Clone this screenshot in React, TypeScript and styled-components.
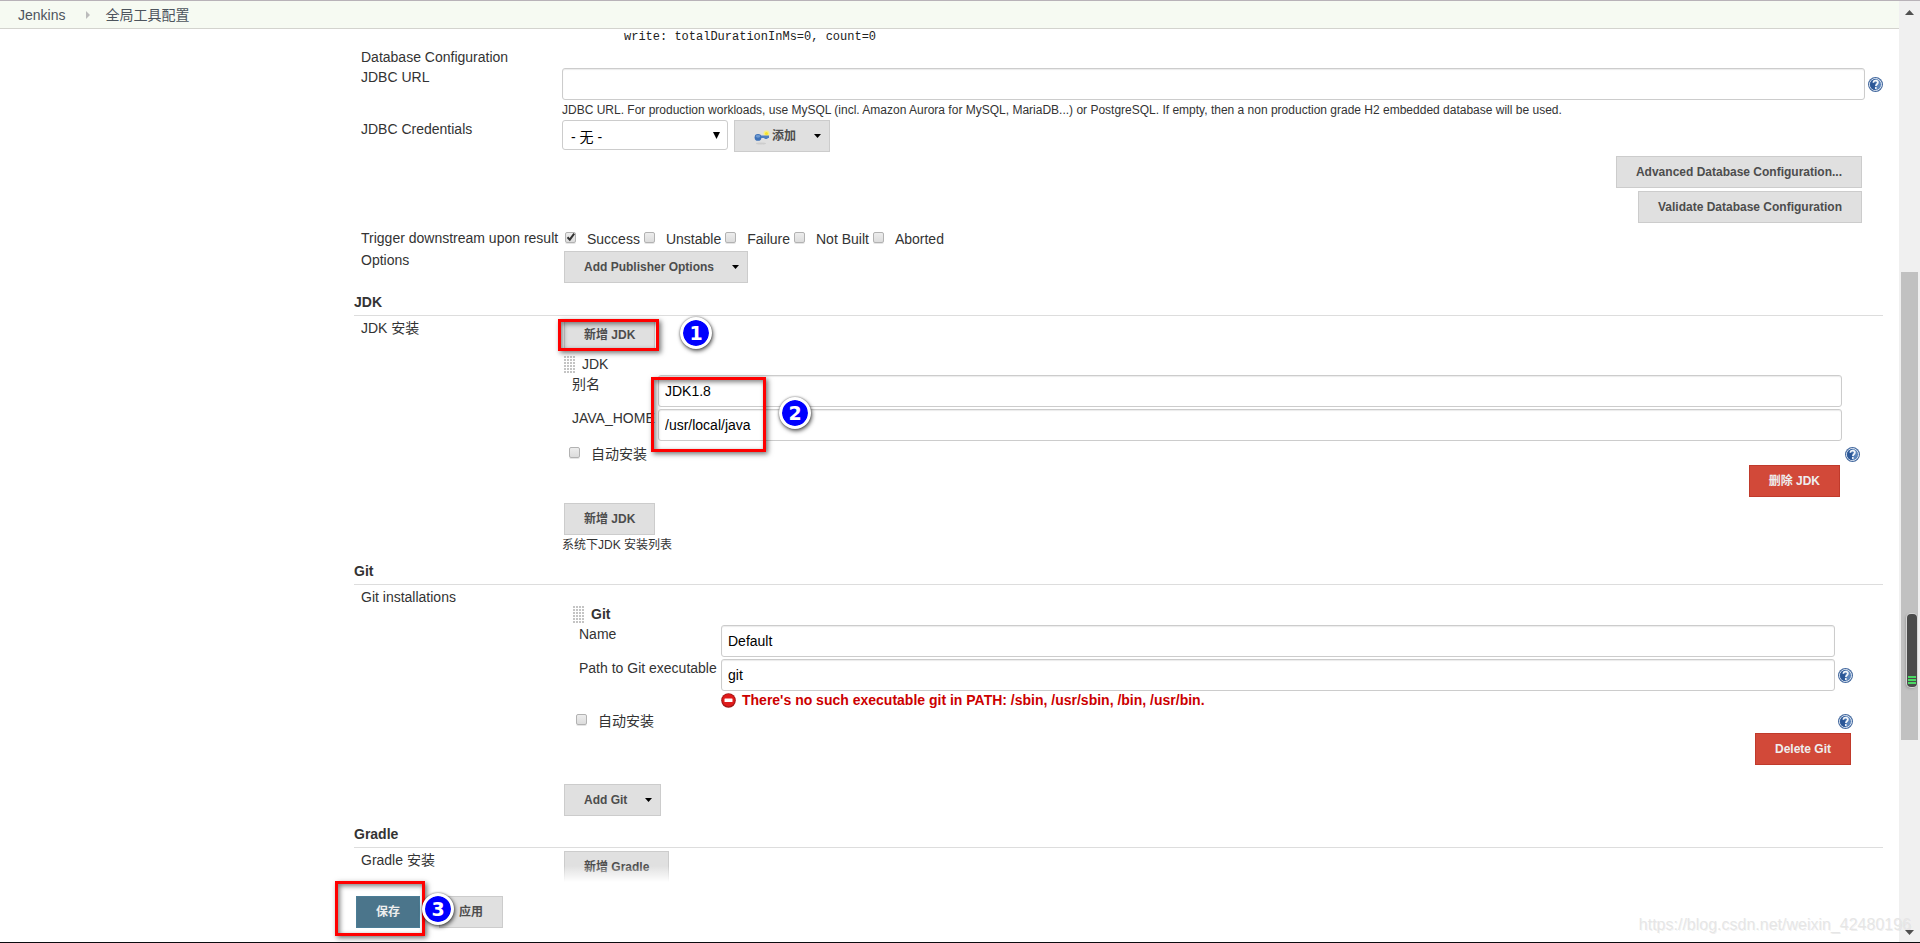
import React from "react";
import styled, { createGlobalStyle, css } from "styled-components";

const GlobalStyle = createGlobalStyle`
  *, *::before, *::after { box-sizing: border-box; }
  html, body { margin: 0; padding: 0; background: #fff; }
  body, button, input, select {
    font-family: "Liberation Sans", "Noto Sans CJK SC", sans-serif;
    font-size: 14px;
    line-height: 20px;
  }
  body { color: #333; }
`;

/* ---------- shell ---------- */

const Shell = styled.div`
  position: relative;
  display: grid;
  grid-template-columns: minmax(0, 1fr) 21px;
  height: 100vh;
  border-top: 1px solid #b8b2b8;
  border-bottom: 1px solid #0b0b0f;
  overflow: hidden;
`;

const Viewport = styled.div`
  position: relative;
  display: flex;
  flex-direction: column;
  min-height: 0;
  overflow: hidden;
`;

const Breadcrumbs = styled.nav`
  display: flex;
  align-items: center;
  flex: none;
  height: 28px;
  padding-left: 18px;
  background: #f6faf2;
  border-bottom: 1px solid #d3d3ce;
`;

const Crumb = styled.a`
  color: #4d545d;
  text-decoration: none;
`;

const CrumbArrow = styled.svg`
  width: 4px;
  height: 8px;
  margin: 0 15px 0 21px;
`;

const Main = styled.main`
  display: flex;
  flex-direction: column;
  padding: 0 16px 0 354px;
`;

const LogLine = styled.pre`
  margin: 0 0 2px;
  padding-left: 270px;
  font: 12px/16px "Liberation Mono", monospace;
  color: #222;
`;

/* ---------- form rows ---------- */

const Heading = styled.h2`
  margin: 0 0 2px;
  height: 24px;
  font-size: 14px;
  line-height: 20px;
  border-bottom: 1px solid #ddd;
`;

const Section = styled.section<{ $gap?: number }>`
  display: flex;
  flex-direction: column;
  margin-top: ${(p) => p.$gap ?? 8}px;
`;

const Row = styled.div<{ $label?: number; $top?: number; $nested?: boolean }>`
  display: grid;
  grid-template-columns: ${(p) => p.$label ?? 201}px minmax(0, 1fr) 18px;
  align-items: start;
  padding-left: ${(p) => (p.$nested ? 0 : 7)}px;
  margin-top: ${(p) => p.$top ?? 0}px;
`;

const rowLabel = css`
  height: 20px;
  white-space: nowrap;
`;
const RowLabel = styled.label`
  ${rowLabel}
`;
const RowTitle = styled.div`
  ${rowLabel}
`;

const Cell = styled.div<{ $indent?: number }>`
  display: flex;
  align-items: flex-start;
  gap: 6px;
  padding-top: 1px;
  padding-left: ${(p) => p.$indent ?? 0}px;
`;

const TextInput = styled.input`
  display: block;
  width: 100%;
  height: 32px;
  padding: 0 6px;
  color: #000;
  background: #fff;
  border: 1px solid #ccc;
  border-radius: 3px;
  box-shadow: inset 0 1px 1px rgba(0, 0, 0, 0.08);
  outline: none;
`;

const Description = styled.p`
  margin: 0 0 0 208px;
  height: 20px;
  font-size: 12px;
  line-height: 20px;
`;

const SelectBox = styled.div`
  position: relative;
  width: 166px;
`;

const Select = styled.select`
  appearance: none;
  display: block;
  width: 100%;
  height: 30px;
  padding: 3px 8px 0;
  color: #000;
  background: #fff;
  border: 1px solid #ccc;
  border-radius: 3px;
  outline: none;
`;

const SelectArrow = styled.svg`
  position: absolute;
  right: 8px;
  top: 12px;
  width: 7px;
  height: 7px;
  pointer-events: none;
`;

/* ---------- buttons ---------- */

type Tone = "plain" | "primary" | "danger";
const tones: Record<Tone, { bg: string; line: string; ink: string }> = {
  plain: { bg: "#e0e0e0", line: "#ccc", ink: "#4d4d4d" },
  primary: { bg: "#4b758b", line: "#4b7d96", ink: "#eee" },
  danger: { bg: "#d24939", line: "#c03a2b", ink: "#eee" },
};

const Button = styled.button<{ $tone?: Tone; $menu?: boolean }>`
  display: inline-flex;
  align-items: center;
  flex: none;
  height: 32px;
  padding: 0 ${(p) => (p.$menu ? 8 : 19)}px 0 19px;
  font-size: 12px;
  font-weight: bold;
  white-space: nowrap;
  color: ${(p) => tones[p.$tone ?? "plain"].ink};
  background: ${(p) => tones[p.$tone ?? "plain"].bg};
  border: 1px solid ${(p) => tones[p.$tone ?? "plain"].line};
`;

const CaretSvg = styled.svg`
  width: 7px;
  height: 4px;
  margin-left: 18px;
`;
const Caret = () => (
  <CaretSvg viewBox="0 0 7 4" aria-hidden="true">
    <path d="M0 0h7L3.5 4z" fill="#000" />
  </CaretSvg>
);

const KeySvg = styled.svg`
  width: 16px;
  height: 16px;
  margin: 4px 2px 0 0;
`;
const KeyIcon = () => (
  <KeySvg viewBox="0 0 16 16" aria-hidden="true">
    <ellipse cx="7" cy="13.5" rx="5" ry="1" fill="#cdcdcd" />
    <circle cx="12.500" cy="3.500" r="3" fill="#f7ee86" />
    <circle cx="12.500" cy="3.500" r="1.600" fill="#f5e22c" />
    <path d="M5 5.500h10v2.500h-1.500v1h-3v-1H5z" fill="#4f7fc0" />
    <ellipse cx="4" cy="7.400" rx="3.400" ry="3.400" fill="#3e72b8" />
    <ellipse cx="4" cy="6.300" rx="2.300" ry="1.400" fill="#6f9bd2" />
  </KeySvg>
);

const ButtonStack = styled.div<{ $right: number; $top: number }>`
  display: flex;
  flex-direction: column;
  align-items: flex-end;
  gap: 3px;
  margin-top: ${(p) => p.$top}px;
  padding-right: ${(p) => p.$right}px;
`;

/* ---------- check boxes ---------- */

const CheckLabel = styled.label`
  display: inline-flex;
  align-items: center;
  gap: 11px;
  height: 20px;
  white-space: nowrap;
`;

const CheckBoxWrap = styled.span`
  position: relative;
  display: block;
  width: 11px;
  height: 11px;
  margin-bottom: 3px;
`;

const CheckInput = styled.input`
  appearance: none;
  display: block;
  width: 11px;
  height: 11px;
  margin: 0;
  border: 1px solid #b2b2b2;
  border-radius: 2px;
  background: linear-gradient(#ededed, #dcdcdc);
  box-shadow: 0 1px 0 rgba(0, 0, 0, 0.1);
`;

const Tick = styled.svg`
  position: absolute;
  left: 1px;
  top: 0;
  width: 10px;
  height: 10px;
  pointer-events: none;
`;

const CheckBox = ({ label, checked }: { label: string; checked?: boolean }) => (
  <CheckLabel>
    <CheckBoxWrap>
      <CheckInput type="checkbox" defaultChecked={checked} />
      {checked && (
        <Tick viewBox="0 0 10 10" aria-hidden="true">
          <path d="M1.5 5.2 3.8 7.6 8.2 1.6" fill="none" stroke="#333" strokeWidth="2" />
        </Tick>
      )}
    </CheckBoxWrap>
    {label}
  </CheckLabel>
);

const CheckGroup = styled.div`
  display: flex;
  gap: 4px;
  padding-left: 3px;
  padding-top: 1px;
`;

/* ---------- icons ---------- */

const HelpLink = styled.a<{ $top?: number }>`
  display: block;
  width: 16px;
  height: 16px;
  margin-left: 2px;
  margin-top: ${(p) => p.$top ?? 0}px;
`;

const Help = ({ top }: { top?: number }) => (
  <HelpLink href="#help" $top={top} aria-label="Help">
    <svg width="16" height="16" viewBox="0 0 16 16" aria-hidden="true">
      <circle cx="8.5" cy="8.5" r="7.500" fill="#44699f" />
      <circle cx="8.5" cy="8.5" r="6" fill="#5c85bb" stroke="#e3eaf4" strokeWidth="1" />
      <path d="M3 8.500a5.500 5.500 0 0 1 5.500-5.500v11a5.500 5.500 0 0 1-5.500-5.500z" fill="#2b5797" />
      <path
        d="M6.400 6.800c0-1.500 1-2.200 2.200-2.200s2.300.7 2.300 2c0 1.600-2 1.700-2 3.300"
        fill="none"
        stroke="#f4f7fb"
        strokeWidth="1.700"
      />
      <circle cx="8.800" cy="12" r="1" fill="#fff" />
    </svg>
  </HelpLink>
);

const Handle = styled.span`
  flex: none;
  width: 11px;
  height: 18px;
  background-image: radial-gradient(circle at 1px 1px, #c4c4c4 1px, transparent 1px);
  background-size: 3px 3px;
`;

const ErrorIcon = () => (
  <svg width="15" height="15" viewBox="0 0 15 15" aria-hidden="true">
    <circle cx="7.5" cy="7.5" r="7.3" fill="#a31515" />
    <circle cx="7.5" cy="7.2" r="6.2" fill="#e01b1b" />
    <rect x="3.500" y="5.500" width="8" height="3.500" rx="0.500" fill="#fff" />
  </svg>
);

const ErrorLine = styled.div`
  display: flex;
  align-items: center;
  gap: 6px;
  height: 17px;
  font-weight: bold;
  color: #c00;

  svg { margin-top: 2px; }
`;

/* ---------- repeatable items ---------- */

const Item = styled.div<{ $left: number; $right: number; $top?: number }>`
  display: flex;
  flex-direction: column;
  margin-left: ${(p) => p.$left}px;
  margin-right: ${(p) => p.$right}px;
  margin-top: ${(p) => p.$top ?? 0}px;
`;

const ItemHeader = styled.div<{ $bold?: boolean }>`
  display: flex;
  align-items: center;
  gap: 7px;
  height: 20px;
  margin-left: ${(p) => (p.$bold ? -6 : -8)}px;
  font-weight: ${(p) => (p.$bold ? "bold" : "normal")};

  ${Handle} { margin-top: 2px; }
`;

const ItemFields = styled.div`
  position: relative;
  display: flex;
  flex-direction: column;
  gap: 1px;
`;

const AutoRow = styled.div<{ $top: number }>`
  display: flex;
  justify-content: space-between;
  height: 20px;
  margin-top: ${(p) => p.$top}px;
  margin-left: -3px;
`;

/* ---------- step annotations ---------- */

const Anchor = styled.div`
  position: relative;
  display: flex;
`;

type Box = { $x: number; $y: number; $w: number; $h: number };
const Frame = styled.div<Box>`
  position: absolute;
  left: ${(p) => p.$x}px;
  top: ${(p) => p.$y}px;
  width: ${(p) => p.$w}px;
  height: ${(p) => p.$h}px;
  border: 3px solid #f00;
  box-shadow: 2px 2px 5px rgba(0, 0, 0, 0.55), inset 2px 2px 5px rgba(0, 0, 0, 0.5);
  pointer-events: none;
`;

const Step = styled.div<{ $x: number; $y: number }>`
  position: absolute;
  z-index: 1;
  left: ${(p) => p.$x}px;
  top: ${(p) => p.$y}px;
  display: flex;
  align-items: center;
  justify-content: center;
  width: 32px;
  height: 32px;
  border: 3px solid #fff;
  border-radius: 50%;
  background: #00f;
  background-clip: padding-box;
  box-shadow: 1px 2px 4px rgba(0, 0, 0, 0.65), 0 0 2px rgba(0, 0, 0, 0.5);
  color: #fff;
  font: bold 19px/26px "DejaVu Sans", sans-serif;
`;

/* ---------- bottom bar, scroll bar, watermark ---------- */

const BottomBar = styled.div`
  position: absolute;
  left: 0;
  right: 0;
  bottom: 0;
  display: flex;
  gap: 19px;
  padding: 30px 0 14px 356px;
  background: linear-gradient(rgba(255, 255, 255, 0), #fff 16px);
`;

const ScrollBar = styled.div`
  display: flex;
  flex-direction: column;
  align-items: center;
  padding: 9px 0 7px;
  background: #f0f0f0;
`;

const ScrollArrow = styled.svg`
  flex: none;
  width: 9px;
  height: 5px;
`;

const ThumbTrack = styled.div`
  flex: 1;
  display: flex;
  width: 17px;
  padding: 257px 0 190px;
`;

const Thumb = styled.div`
  position: relative;
  flex: 1;
  background: #c1c1c1;
`;

const Meter = styled.div`
  position: absolute;
  right: 1px;
  top: 73%;
  display: flex;
  flex-direction: column;
  justify-content: flex-end;
  gap: 1px;
  width: 10px;
  height: 73px;
  padding: 0 1px 3px;
  border-radius: 4px;
  background: #4b4b4b;
  box-shadow: 0 0 0 1px #d6d6d6, -1px 1px 3px rgba(0, 0, 0, 0.3);
`;

const MeterBar = styled.span`
  height: 2px;
  background: #4bd964;
`;

const Watermark = styled.div`
  position: absolute;
  right: 9px;
  bottom: 7px;
  font-size: 16px;
  color: #e6e6e6;
  text-shadow: 1px 1px 0 rgba(0, 0, 0, 0.06);
  pointer-events: none;
`;

const results = ["Success", "Unstable", "Failure", "Not Built", "Aborted"];

export default function App() {
  return (
    <>
      <GlobalStyle />
      <Shell>
        <Viewport>
          <Breadcrumbs aria-label="Breadcrumb">
            <Crumb href="#jenkins">Jenkins</Crumb>
            <CrumbArrow viewBox="0 0 4 8" aria-hidden="true">
              <path d="M0 0l4 4-4 4z" fill="#bbb" />
            </CrumbArrow>
            <Crumb href="#tools">全局工具配置</Crumb>
          </Breadcrumbs>

          <Main>
            <LogLine>write: totalDurationInMs=0, count=0</LogLine>

            <Row>
              <RowTitle>Database Configuration</RowTitle>
            </Row>
            <Row>
              <RowLabel htmlFor="jdbc-url">JDBC URL</RowLabel>
              <Cell>
                <TextInput id="jdbc-url" type="text" />
              </Cell>
              <Help top={9} />
            </Row>
            <Description>
              JDBC URL. For production workloads, use MySQL (incl. Amazon Aurora for MySQL,
              MariaDB...) or PostgreSQL. If empty, then a non production grade H2 embedded
              database will be used.
            </Description>
            <Row $top={-1}>
              <RowLabel htmlFor="jdbc-credentials">JDBC Credentials</RowLabel>
              <Cell>
                <SelectBox>
                  <Select id="jdbc-credentials">
                    <option>- 无 -</option>
                  </Select>
                  <SelectArrow viewBox="0 0 8 8" aria-hidden="true">
                    <path d="M0 0h8L4 8z" fill="#000" />
                  </SelectArrow>
                </SelectBox>
                <Button type="button" $menu>
                  <KeyIcon />
                  添加
                  <Caret />
                </Button>
              </Cell>
            </Row>
            <ButtonStack $right={21} $top={4}>
              <Button type="button">Advanced Database Configuration...</Button>
              <Button type="button">Validate Database Configuration</Button>
            </ButtonStack>
            <Row $top={5}>
              <RowTitle>Trigger downstream upon result</RowTitle>
              <CheckGroup>
                {results.map((r, i) => (
                  <CheckBox key={r} label={r} checked={i === 0} />
                ))}
              </CheckGroup>
            </Row>
            <Row $top={1}>
              <RowTitle>Options</RowTitle>
              <Cell $indent={2}>
                <Button type="button" $menu>
                  Add Publisher Options
                  <Caret />
                </Button>
              </Cell>
            </Row>

            <Section $gap={9}>
              <Heading>JDK</Heading>
              <Row>
                <RowTitle>JDK 安装</RowTitle>
                <Cell $indent={2}>
                  <Anchor>
                    <Button type="button">新增 JDK</Button>
                    <Frame $x={-6} $y={0} $w={101} $h={32} />
                    <Step $x={116} $y={-2}>1</Step>
                  </Anchor>
                </Cell>
              </Row>
              <Item $left={218} $right={23} $top={3}>
                <ItemHeader>
                  <Handle />
                  JDK
                </ItemHeader>
                <ItemFields>
                  <Row $nested $label={86}>
                    <RowLabel htmlFor="jdk-name">别名</RowLabel>
                    <Cell>
                      <TextInput id="jdk-name" type="text" defaultValue="JDK1.8" />
                    </Cell>
                  </Row>
                  <Row $nested $label={86}>
                    <RowLabel htmlFor="java-home">JAVA_HOME</RowLabel>
                    <Cell>
                      <TextInput id="java-home" type="text" defaultValue="/usr/local/java" />
                    </Cell>
                  </Row>
                  <Frame $x={79} $y={3} $w={115} $h={75} />
                  <Step $x={207} $y={23}>2</Step>
                </ItemFields>
                <AutoRow $top={3}>
                  <CheckBox label="自动安装" />
                  <Help top={2} />
                </AutoRow>
                <ButtonStack $right={20} $top={1}>
                  <Button type="button" $tone="danger">删除 JDK</Button>
                </ButtonStack>
              </Item>
              <Row $top={5}>
                <span />
                <Cell $indent={2}>
                  <Button type="button">新增 JDK</Button>
                </Cell>
              </Row>
              <Description>系统下JDK 安装列表</Description>
            </Section>

            <Section $gap={6}>
              <Heading>Git</Heading>
              <Row>
                <RowTitle>Git installations</RowTitle>
              </Row>
              <Item $left={225} $right={30} $top={-3}>
                <ItemHeader $bold>
                  <Handle />
                  Git
                </ItemHeader>
                <ItemFields>
                  <Row $nested $label={142}>
                    <RowLabel htmlFor="git-name">Name</RowLabel>
                    <Cell>
                      <TextInput id="git-name" type="text" defaultValue="Default" />
                    </Cell>
                  </Row>
                  <Row $nested $label={142}>
                    <RowLabel htmlFor="git-path">Path to Git executable</RowLabel>
                    <Cell>
                      <TextInput id="git-path" type="text" defaultValue="git" />
                    </Cell>
                    <Help top={9} />
                  </Row>
                </ItemFields>
                <Row $nested $label={142}>
                  <span />
                  <ErrorLine role="alert">
                    <ErrorIcon />
                    There's no such executable git in PATH: /sbin, /usr/sbin, /bin, /usr/bin.
                  </ErrorLine>
                </Row>
                <AutoRow $top={3}>
                  <CheckBox label="自动安装" />
                  <Help top={2} />
                </AutoRow>
                <ButtonStack $right={2} $top={2}>
                  <Button type="button" $tone="danger">Delete Git</Button>
                </ButtonStack>
              </Item>
              <Row $top={18}>
                <span />
                <Cell $indent={2}>
                  <Button type="button" $menu>
                    Add Git
                    <Caret />
                  </Button>
                </Cell>
              </Row>
            </Section>

            <Section>
              <Heading>Gradle</Heading>
              <Row>
                <RowTitle>Gradle 安装</RowTitle>
                <Cell $indent={2}>
                  <Button type="button">新增 Gradle</Button>
                </Cell>
              </Row>
            </Section>
          </Main>

          <BottomBar>
            <Anchor>
              <Button type="submit" $tone="primary">保存</Button>
              <Frame $x={-21} $y={-15} $w={90} $h={55} />
              <Step $x={66} $y={-3}>3</Step>
            </Anchor>
            <Button type="button">应用</Button>
          </BottomBar>
        </Viewport>

        <ScrollBar aria-hidden="true">
          <ScrollArrow viewBox="0 0 9 5">
            <path d="M0 5h9L4.5 0z" fill="#505050" />
          </ScrollArrow>
          <ThumbTrack>
            <Thumb>
              <Meter>
                <MeterBar />
                <MeterBar />
                <MeterBar />
              </Meter>
            </Thumb>
          </ThumbTrack>
          <ScrollArrow viewBox="0 0 9 5">
            <path d="M0 0h9L4.5 5z" fill="#505050" />
          </ScrollArrow>
        </ScrollBar>
        <Watermark>https://blog.csdn.net/weixin_42480196</Watermark>
      </Shell>
    </>
  );
}
